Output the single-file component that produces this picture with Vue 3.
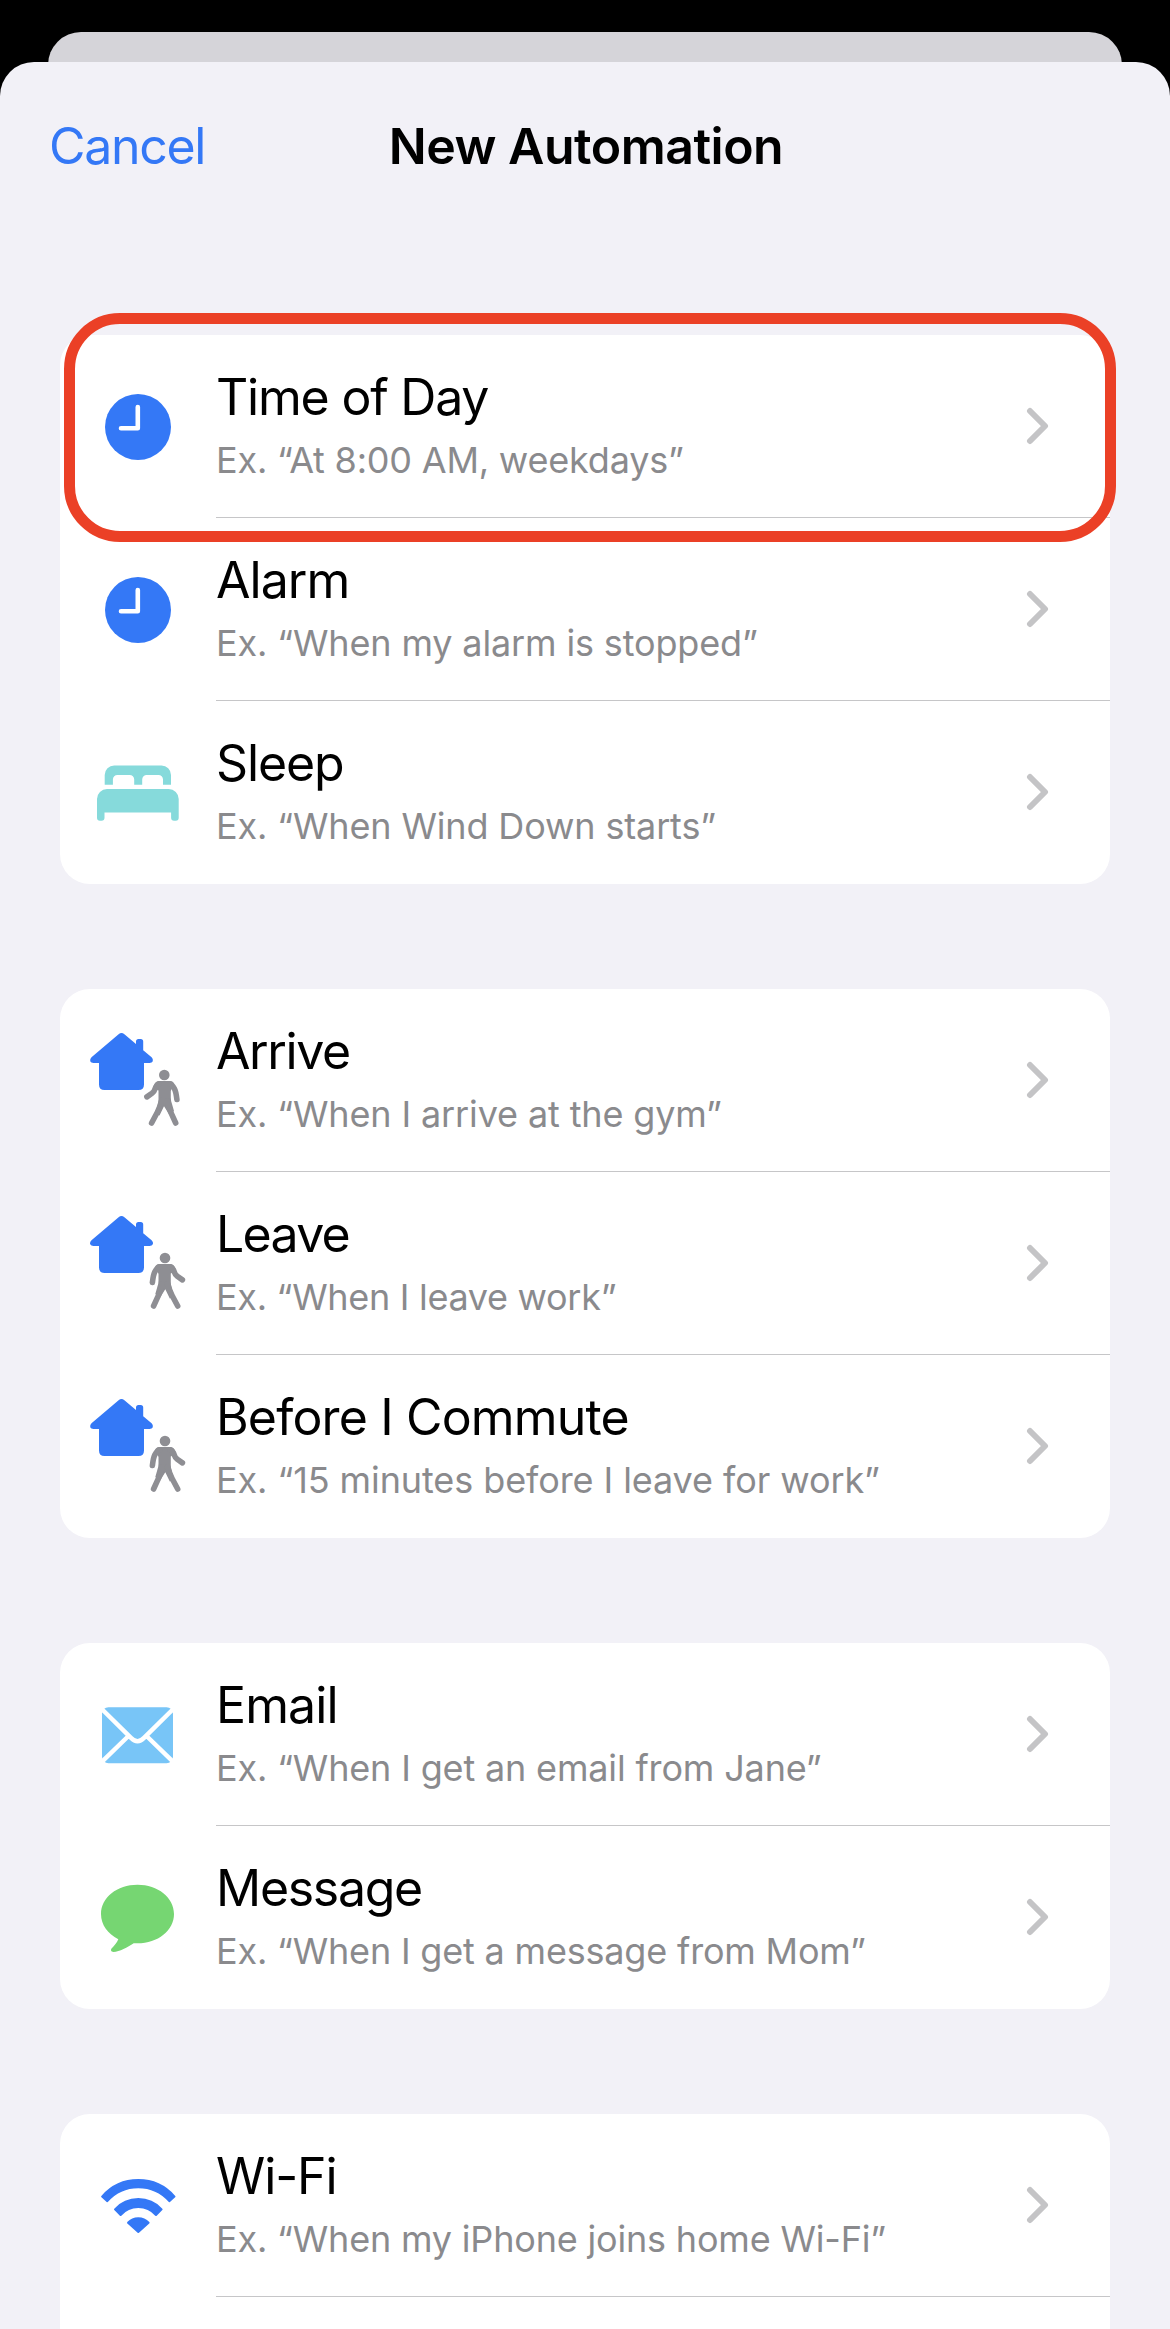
<script setup>
const groups = [
  [
    { title: 'Time of Day', note: 'Ex. “At 8:00 AM, weekdays”', icon: 'clock', track: [-1.2, -0.2], marked: true },
    { title: 'Alarm', note: 'Ex. “When my alarm is stopped”', icon: 'clock', track: [-0.95, -0.14] },
    { title: 'Sleep', note: 'Ex. “When Wind Down starts”', icon: 'bed', track: [-1.1, -0.14] },
  ],
  [
    { title: 'Arrive', note: 'Ex. “When I arrive at the gym”', icon: 'arrive', track: [-1.4, -0.13] },
    { title: 'Leave', note: 'Ex. “When I leave work”', icon: 'leave', track: [-1.7, -0.3] },
    { title: 'Before I Commute', note: 'Ex. “15 minutes before I leave for work”', icon: 'leave', track: [-0.84, -0.09] },
  ],
  [
    { title: 'Email', note: 'Ex. “When I get an email from Jane”', icon: 'mail', track: [-0.91, -0.16] },
    { title: 'Message', note: 'Ex. “When I get a message from Mom”', icon: 'bubble', track: [-1.29, -0.185] },
  ],
  [
    { title: 'Wi-Fi', note: 'Ex. “When my iPhone joins home Wi-Fi”', icon: 'wifi', track: [-1.1, -0.18] },
  ],
]
</script>

<template>
  <div class="screen">
    <div class="sheet-behind"></div>
    <main class="sheet">
      <header class="bar">
        <a class="cancel">Cancel</a>
        <h1 class="heading">New Automation</h1>
        <span></span>
      </header>

      <section v-for="(rows, g) in groups" :key="g" class="card" :class="{ last: g === groups.length - 1 }">
        <div v-for="row in rows" :key="row.title" class="row">
          <svg class="icon" viewBox="0 0 156 183">
            <template v-if="row.icon === 'clock'">
              <circle cx="78" cy="92" r="33" fill="#3478f6" />
              <path d="M77.8 72V93.2H61" fill="none" stroke="#fff" stroke-width="4.6" stroke-linecap="round" stroke-linejoin="round" />
            </template>

            <template v-else-if="row.icon === 'bed'">
              <path fill="#86dadb" d="M44.7 83.8V74a9.5 9.5 0 0 1 9.5-9.5h47.3A9.5 9.5 0 0 1 111 74v9.8h-8V78.5a4.5 4.5 0 0 0-4.5-4.5H86.7a4.5 4.5 0 0 0-4.5 4.5v5.3H74.2V78.5a4.5 4.5 0 0 0-4.5-4.5H57.4a4.5 4.5 0 0 0-4.5 4.5v5.3z" />
              <path fill="#86dadb" d="M37 98a10 10 0 0 1 10-10h61.7a10 10 0 0 1 10 10v18.7a3 3 0 0 1-3 3h-1.6a3 3 0 0 1-3-3V111.500H44.500v5.200a3 3 0 0 1-3 3H40a3 3 0 0 1-3-3z" />
            </template>

            <template v-else-if="row.icon === 'arrive' || row.icon === 'leave'">
              <path fill="#3478f6" d="M58.6 45.3Q61.5 42.9 64.4 45.3L76 54.9V52.5Q76 50 78.5 50h2.2Q83.2 50 83.2 52.5V61.2L91.6 68.2Q93.6 70.2 92.8 72.200Q92 74 89.5 74H84V95.5Q84 101 78.500 101H44.5Q39 101 39 95.5V74H33.5Q31 74 30.2 72.2Q29.5 70.2 31.5 68.2Z" />
              <g fill="#8e8e93" stroke="#8e8e93" stroke-linecap="round" stroke-linejoin="round" :transform="row.icon === 'leave' ? 'translate(209.3 0) scale(-1 1)' : null">
                <circle cx="104.300" cy="86" r="5.3" stroke="none" />
                <path stroke="none" d="M98.5 92H110Q112.500 92 114 94.200L110.8 102V108.500Q110.8 112 112 115L114 122L109.500 126L104 117.300L99.500 126.500L94.5 124.5Q98.500 116 98.500 111V101.5L93 98Q95.500 92 98.500 92Z" />
                <path fill="none" stroke-width="5.6" d="M98.800 94.800Q96.6 95.500 94.900 100.200Q94.200 102.600 92 104.300L86.900 107.900M109.8 94.800Q112 95.300 114.500 99.800Q116 102.500 116.900 110.500M101.600 111.500Q99.900 118.500 97.200 123.500L91.600 134M107.300 112Q108.600 118.500 110.500 122.700L115.700 134" />
              </g>
            </template>

            <template v-else-if="row.icon === 'mail'">
              <rect x="42" y="64.2" width="71" height="56" rx="6.5" fill="#78c5f7" />
              <path fill="none" stroke="#fff" stroke-width="4.4" d="M40 64.3L71 94.9Q77.5 101.6 84 94.9L115 64.3M40 120.6L69.5 92M115 120.6L85.5 92" />
            </template>

            <template v-else-if="row.icon === 'bubble'">
              <path fill="#76d672" d="M77.5 58.7C97.9 58.7 114 71.5 114 88S97.9 117.3 77.5 117.3Q75.500 117.400 73.7 117.2C67.500 121.300 59.500 125.600 53.500 126C51 126 50.300 123.800 51.800 122.300C54.300 119.800 57 116.500 58.300 113.200C48 107.800 41 99 41 88C41 71.500 57.100 58.700 77.500 58.700Z" />
            </template>

            <template v-else>
              <g fill="#3478f6" stroke="#3478f6" stroke-width="2" stroke-linejoin="round">
                <path d="M42.100 82.600A48 48 0 0 1 114.500 82.600L109.300 87.200A41.500 41.500 0 0 0 47.300 87.200Z" />
                <path d="M55 95.300A31.500 31.500 0 0 1 101.600 95.300L96 101A23.500 23.500 0 0 0 60.600 101Z" />
                <path d="M68 108.800A14 14 0 0 1 88.600 108.800L78.300 118Z" />
              </g>
            </template>
          </svg>

          <div class="body">
            <div class="text">
              <div class="title" :style="{ letterSpacing: row.track[0] + 'px' }">{{ row.title }}</div>
              <div class="note" :style="{ letterSpacing: row.track[1] + 'px' }">{{ row.note }}</div>
            </div>
            <svg class="chevron" width="24" height="40" viewBox="0 0 24 40">
              <path d="M5 5L20 20L5 35" fill="none" stroke="#c4c4c6" stroke-width="6" stroke-linecap="round" stroke-linejoin="round" />
            </svg>
          </div>
          <div v-if="row.marked" class="mark"></div>
        </div>
      </section>
    </main>
  </div>
</template>

<style>
body {
  margin: 0;
  background: #000;
}
</style>

<style scoped>
.screen {
  box-sizing: border-box;
  width: 1170px;
  height: 2329px;
  padding-top: 32px;
  display: flex;
  flex-direction: column;
  overflow: hidden;
  background: #000;
  font-family: Inter, 'Liberation Sans', sans-serif;
}
.sheet-behind {
  flex: none;
  height: 60px;
  margin: 0 48px -30px;
  border-radius: 33px 33px 0 0;
  background: #d5d4d9;
}
.sheet {
  position: relative;
  flex: 1;
  min-height: 0;
  display: flex;
  flex-direction: column;
  border-radius: 34px 34px 0 0;
  background: #f2f1f7;
}
.bar {
  flex: none;
  display: grid;
  grid-template-columns: 1fr auto 1fr;
  height: 219px;
  padding: 54px 47px 0 49px;
  box-sizing: border-box;
  margin-bottom: 54px;
  font-size: 50px;
  line-height: 60px;
  white-space: nowrap;
}
.cancel {
  color: #3478f6;
  letter-spacing: -1.31px;
}
.heading {
  margin: 0;
  font-size: 50px;
  font-weight: 600;
  letter-spacing: -0.5px;
  color: #000;
}
.card {
  flex: none;
  margin: 0 60px 105px;
  border-radius: 30px;
  background: #fff;
}
.card.last {
  flex: 1;
  margin-bottom: 0;
  border-radius: 30px 30px 0 0;
}
.row {
  position: relative;
  display: flex;
  height: 183px;
}
.icon {
  flex: none;
  width: 156px;
  height: 183px;
}
.body {
  flex: 1;
  display: flex;
  align-items: center;
  justify-content: space-between;
  box-sizing: border-box;
  padding-right: 61px;
  border-bottom: 1px solid #c6c6c8;
}
.row:last-child .body {
  border-bottom-color: transparent;
}
.card.last .body {
  border-bottom-color: #c6c6c8;
}
.text {
  align-self: flex-start;
  padding-top: 32px;
  white-space: nowrap;
}
.title {
  font-size: 50px;
  line-height: 60px;
  color: #000;
}
.note {
  margin-top: 11px;
  font-size: 36px;
  line-height: 44px;
  color: #8a8a8d;
}
.chevron {
  flex: none;
}
.mark {
  position: absolute;
  top: -22px;
  left: 4px;
  width: 1052px;
  height: 229px;
  box-sizing: border-box;
  border: 11px solid #eb4026;
  border-radius: 56px;
  z-index: 1;
}
</style>
